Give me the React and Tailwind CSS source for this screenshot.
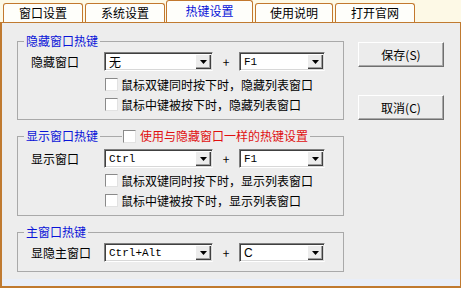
import React from 'react';

const Arrow = () => (
  <div className="w-[16px] h-full bg-[#ececec] flex items-center justify-center shadow-[inset_1px_1px_0_#ffffff,inset_-1px_-1px_0_#404040,inset_-2px_-2px_0_#a0a0a0]">
    <svg width="7" height="4" viewBox="0 0 7 4"><polygon points="0,0 7,0 3.5,4" fill="#000" /></svg>
  </div>
);

const Combo = ({ value, width, font }) => (
  <div className={`flex h-[19px] p-[1px] bg-white border border-t-[#7f7f7f] border-l-[#7f7f7f] border-b-white border-r-[#f4f4f4] shadow-[inset_1px_1px_0_#404040,inset_-1px_-1px_0_#d8d8d8] ${width}`}>
    <div className={`flex-1 flex items-center pl-[3px] pt-[1px] text-black ${font}`}>{value}</div>
    <Arrow />
  </div>
);

const Box = () => (
  <span className="w-[13px] h-[13px] shrink-0 bg-white border border-t-[#8a8a8a] border-l-[#8a8a8a] border-r-[#e2e2e2] border-b-[#e2e2e2]" />
);

const Check = ({ children, className }) => (
  <div className={`flex items-center h-[19px] pl-[87px] ${className}`}>
    <Box />
    <span className="ml-[3px] leading-[14px]">{children}</span>
  </div>
);

const mono = "font-['Liberation_Mono',monospace] text-[11px] leading-[12px]";
const cjk = "text-[12px] leading-[14px]";

const KeyRow = ({ label, a, b, aFont = mono, bFont = mono }) => (
  <div className="flex items-center">
    <div className="w-[86px] pl-[13px] leading-[14px]">{label}</div>
    <Combo value={a} width="w-[109px]" font={aFont} />
    <div className="w-[26px] text-center leading-[14px]">+</div>
    <Combo value={b} width="w-[86px]" font={bFont} />
  </div>
);

const Tab = ({ children, className }) => (
  <div className={`h-[19px] border border-b-0 border-[#c2782e] rounded-t-[3px] bg-[#fefefa] flex items-center justify-center leading-[14px] ${className}`}>
    {children}
  </div>
);

const Button = ({ children, className }) => (
  <button className={`w-[86px] h-[25px] bg-[#ececec] border border-t-white border-l-white border-b-[#6f6f6f] border-r-[#6f6f6f] shadow-[inset_-1px_-1px_0_#a8a8a8] flex items-center justify-center leading-[14px] text-black ${className}`}>
    {children}
  </button>
);

export default function App() {
  return (
    <div className="w-[461px] h-[288px] flex flex-col bg-[#fdf9e6] text-[12px] text-black font-['Noto_Sans_CJK_SC','Noto_Sans',sans-serif] overflow-hidden">
      <div className="h-[22px] flex items-end pl-[3px] shrink-0">
        <Tab className="w-[80px]">窗口设置</Tab>
        <Tab className="w-[80px] ml-[2px]">系统设置</Tab>
        <Tab className="w-[87px] ml-[1px] h-[22px] text-[#0a14d8] pb-[1px]">热键设置</Tab>
        <Tab className="w-[78px] ml-[2px]">使用说明</Tab>
        <Tab className="w-[80px] ml-[2px]">打开官网</Tab>
      </div>
      <div className="flex-1 flex flex-col bg-[#ededed] border border-[#c07a30] border-l-2 border-b-2">
        <div className="flex flex-1">
          <div className="flex flex-col pt-[11px]">
            <fieldset className="ml-[15px] w-[327px] border border-[#a9a9a9] pt-[4px] pb-[5px] min-w-0">
              <legend className="ml-[6px] px-[2px] leading-[14px] text-[#0a14d8]">隐藏窗口热键</legend>
              <KeyRow label="隐藏窗口" a="无" b="F1" aFont={cjk} />
              <Check className="mt-[4px]">鼠标双键同时按下时，隐藏列表窗口</Check>
              <Check className="mt-[1px]">鼠标中键被按下时，隐藏列表窗口</Check>
            </fieldset>
            <fieldset className="ml-[15px] mt-[9px] w-[327px] border border-[#a9a9a9] pt-[6px] pb-[5px] min-w-0">
              <legend className="ml-[6px] px-[2px] h-[14px] flex items-center leading-[14px]">
                <span className="text-[#0a14d8]">显示窗口热键</span>
                <span className="w-[22px] h-px bg-[#a9a9a9] ml-[2px] mr-[1px]" />
                <Box />
                <span className="ml-[4px] text-[#e01010]">使用与隐藏窗口一样的热键设置</span>
              </legend>
              <KeyRow label="显示窗口" a="Ctrl" b="F1" />
              <Check className="mt-[3px]">鼠标双键同时按下时，显示列表窗口</Check>
              <Check className="mt-[1px]">鼠标中键被按下时，显示列表窗口</Check>
            </fieldset>
            <fieldset className="ml-[15px] mt-[9px] w-[327px] border border-[#a9a9a9] pt-[4px] pb-[9px] min-w-0">
              <legend className="ml-[6px] px-[2px] leading-[14px] text-[#0a14d8]">主窗口热键</legend>
              <KeyRow label="显隐主窗口" a="Ctrl+Alt" b="C" bFont="font-['Liberation_Sans',sans-serif] text-[12px] leading-[14px]" />
            </fieldset>
          </div>
          <div className="flex flex-col ml-[14px] pt-[19px]">
            <Button>保存(S)</Button>
            <Button className="mt-[28px]">取消(C)</Button>
          </div>
        </div>
        <div className="h-[7px] bg-[#e9eef8]" />
      </div>
    </div>
  );
}
